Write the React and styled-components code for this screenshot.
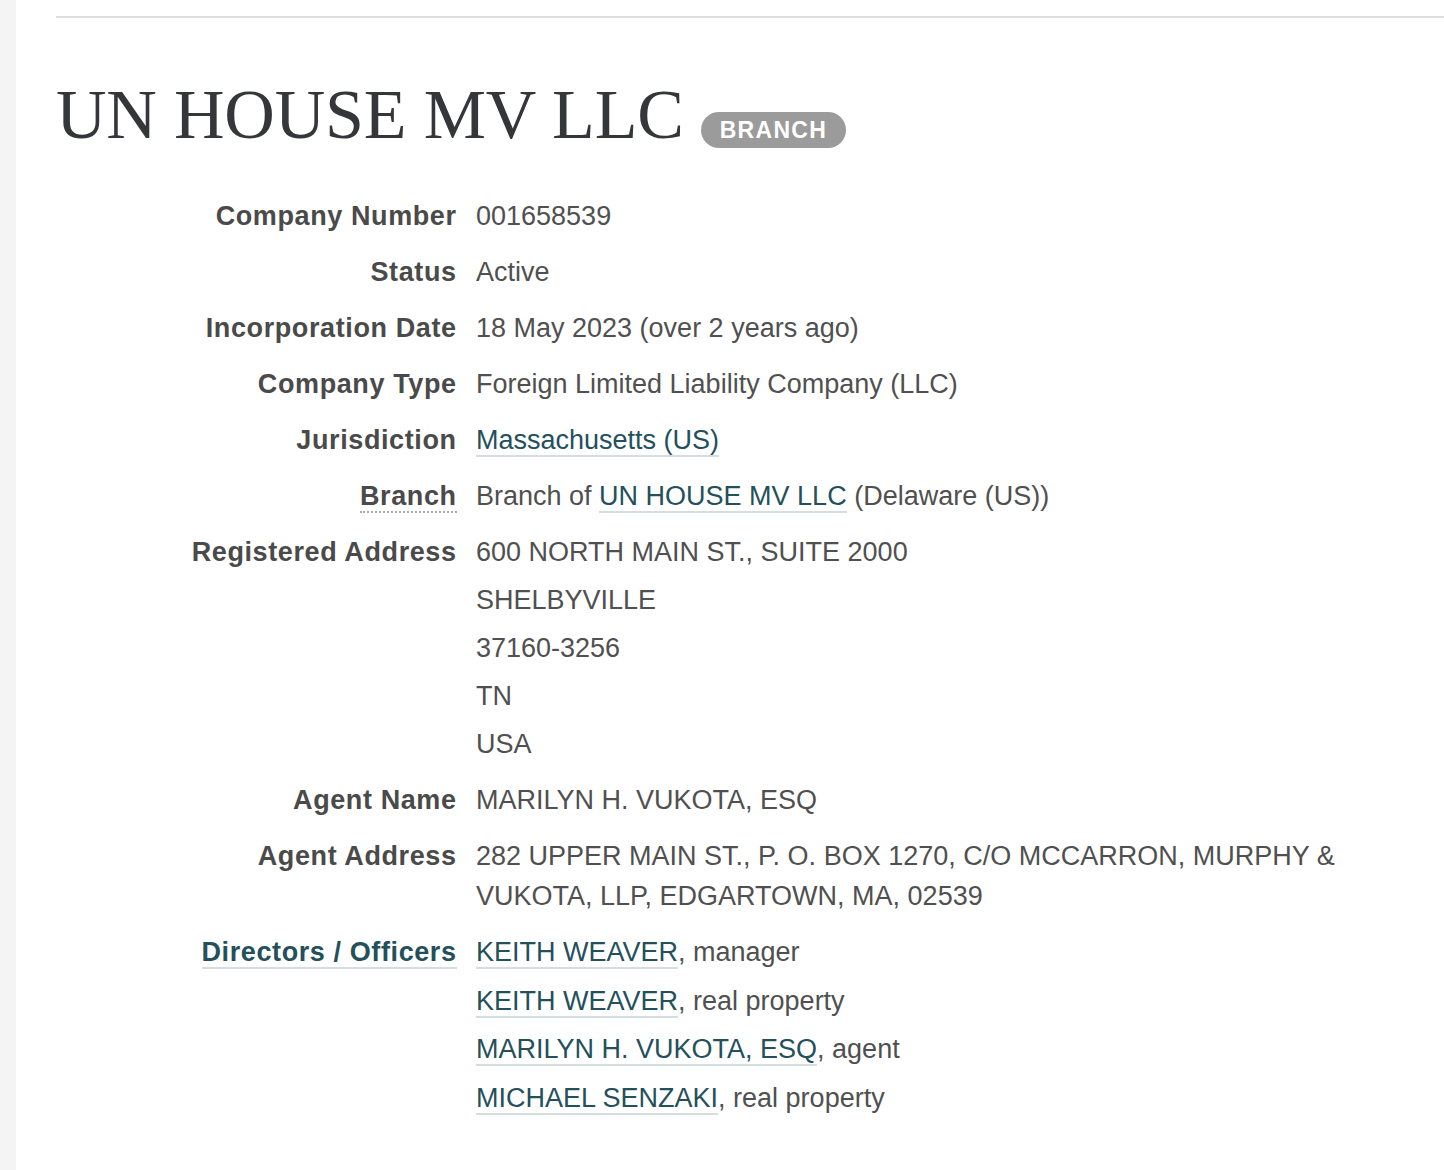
import React from 'react'
import styled, { createGlobalStyle } from 'styled-components'

const GlobalStyle = createGlobalStyle`
body{
	margin:0;
	background:#fff;
	font-family:"Liberation Sans", Arial, sans-serif;
	color:#4d4d4d;
}
`

const rows = [
	{ label: 'Company Number', value: '001658539' },
	{ label: 'Status', value: 'Active' },
	{ label: 'Incorporation Date', value: '18 May 2023 (over 2 years ago)' },
	{ label: 'Company Type', value: 'Foreign Limited Liability Company (LLC)' },
]

const address = ['600 NORTH MAIN ST., SUITE 2000', 'SHELBYVILLE', '37160-3256', 'TN', 'USA']

const officers = [
	{ name: 'KEITH WEAVER', role: 'manager' },
	{ name: 'KEITH WEAVER', role: 'real property' },
	{ name: 'MARILYN H. VUKOTA, ESQ', role: 'agent' },
	{ name: 'MICHAEL SENZAKI', role: 'real property' },
]

const App = () => {
	return (
		<Page>
			<GlobalStyle />
			<Strip />
			<Main>
				<Rule />
				<Heading>
					<Title>UN HOUSE MV LLC</Title>
					<Badge>Branch</Badge>
				</Heading>
				<List>
					{rows.map(r => (
						<React.Fragment key={r.label}>
							<Label>{r.label}</Label>
							<Value>{r.value}</Value>
						</React.Fragment>
					))}
					<Label>Jurisdiction</Label>
					<Value><Link href="#">Massachusetts (US)</Link></Value>
					<Label><Abbr title="Branch">Branch</Abbr></Label>
					<Value>Branch of <Link href="#">UN HOUSE MV LLC</Link> (Delaware (US))</Value>
					<Label>Registered Address</Label>
					<Value>
						<Stack $gap={8}>
							{address.map(a => <div key={a}>{a}</div>)}
						</Stack>
					</Value>
					<Label>Agent Name</Label>
					<Value>MARILYN H. VUKOTA, ESQ</Value>
					<Label>Agent Address</Label>
					<Value>282 UPPER MAIN ST., P. O. BOX 1270, C/O MCCARRON, MURPHY &amp; VUKOTA, LLP, EDGARTOWN, MA, 02539</Value>
					<Label><LabelLink href="#">Directors / Officers</LabelLink></Label>
					<Value>
						<Stack $gap={8.7}>
							{officers.map((o, i) => (
								<div key={i}><Link href="#">{o.name}</Link>, {o.role}</div>
							))}
						</Stack>
					</Value>
				</List>
			</Main>
		</Page>
	)
}

const Page = styled.div`
display:flex;
min-height:100vh;
`
const Strip = styled.div`
width:16px;
flex-shrink:0;
background:#f4f4f4;
`
const Main = styled.main`
flex:1;
padding:16px 50px 40px 40px;
`
const Rule = styled.div`
border-top:2px solid #dedede;
margin-right:-50px;
`
const Heading = styled.div`
display:flex;
align-items:baseline;
gap:17px;
margin-top:55px;
`
const Title = styled.h1`
margin:0;
font-family:"Liberation Serif", "Times New Roman", serif;
font-weight:normal;
font-size:70px;
line-height:84px;
color:#34363a;
letter-spacing:-0.2px;
`
const Badge = styled.span`
display:inline-block;
background:#9b9b9b;
color:#fff;
font-weight:bold;
font-size:23px;
letter-spacing:1.3px;
text-transform:uppercase;
line-height:36px;
padding:0 19px;
border-radius:18px;
`
const List = styled.dl`
display:grid;
grid-template-columns:400px 1fr;
column-gap:20px;
row-gap:16px;
margin:39px 0 0;
font-size:27px;
line-height:40px;
`
const Label = styled.dt`
text-align:right;
font-weight:bold;
color:#4a4a4a;
letter-spacing:0.6px;
margin-right:-0.6px;
`
const Value = styled.dd`
margin:0;
color:#505050;
`
const Stack = styled.div`
display:flex;
flex-direction:column;
gap:${p => p.$gap}px;
`
const Link = styled.a`
color:#24505c;
text-decoration:none;
border-bottom:2px solid #d4dde0;
`
const LabelLink = styled(Link)`
color:#24505c;
`
const Abbr = styled.abbr`
text-decoration:none;
border-bottom:2px dotted #aaa;
cursor:help;
`

export default App
